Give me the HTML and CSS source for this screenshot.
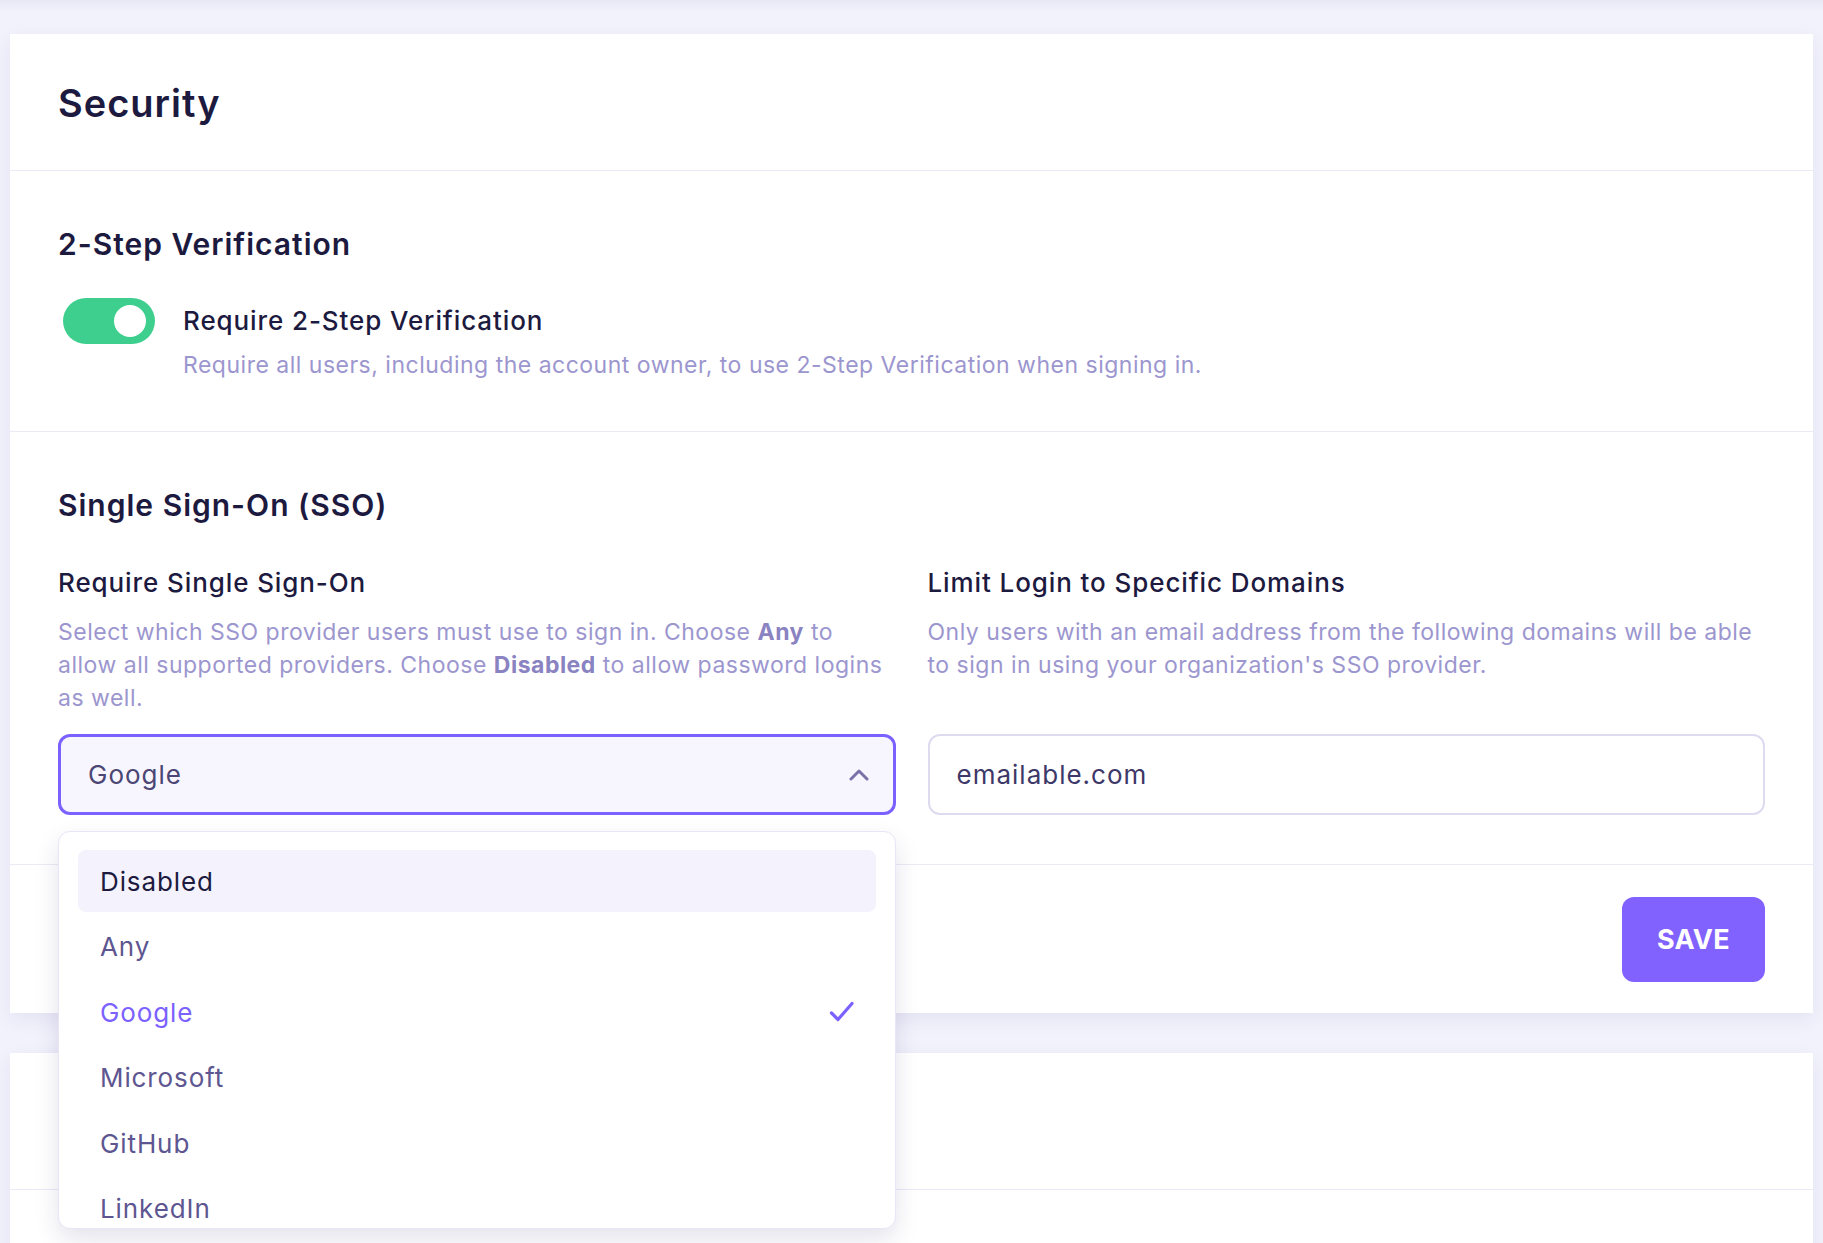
FILE: index.html
```html
<!DOCTYPE html>
<html lang="en">
<head>
    <meta charset="UTF-8">
    <meta name="viewport" content="width=device-width, initial-scale=1.0">
    <title>Security</title>
    <link rel="stylesheet" href="styles.css">
</head>
<body>

    <div class="page">
        <div class="card">
            <div class="card-header">
                <h1>Security</h1>
            </div>

            <!-- 2-Step Verification -->
            <section class="section">
                <h2>2-Step Verification</h2>
                <div class="toggle-row">
                    <span class="toggle on"><span class="knob"></span></span>
                    <div class="toggle-text">
                        <div class="label">Require 2-Step Verification</div>
                        <p class="desc">Require all users, including the account owner, to use 2-Step Verification when signing in.</p>
                    </div>
                </div>
            </section>

            <!-- SSO -->
            <section class="section">
                <h2>Single Sign-On (SSO)</h2>
                <div class="columns">
                    <div class="field">
                        <div class="label">Require Single Sign-On</div>
                        <p class="desc">Select which SSO provider users must use to sign in. Choose <b>Any</b> to allow all supported providers. Choose <b>Disabled</b> to allow password logins as well.</p>
                        <div class="select-wrap">
                            <div class="select open">
                                <span>Google</span>
                                <svg class="chevron" width="20" height="13" viewBox="0 0 20 13"><path d="M2 11 L10 3 L18 11" fill="none" stroke="#7a71a8" stroke-width="3" stroke-linecap="round" stroke-linejoin="round"/></svg>
                            </div>
                            <div class="dropdown">
                                <div class="option active">Disabled</div>
                                <div class="option">Any</div>
                                <div class="option selected">
                                    <span>Google</span>
                                    <svg width="26" height="22" viewBox="0 0 26 22"><path d="M2.5 12 L9 18.5 L23 2.5" fill="none" stroke="#7b61ff" stroke-width="3.2" stroke-linecap="round" stroke-linejoin="round"/></svg>
                                </div>
                                <div class="option">Microsoft</div>
                                <div class="option">GitHub</div>
                                <div class="option">LinkedIn</div>
                                <div class="option">Okta</div>
                            </div>
                        </div>
                    </div>
                    <div class="field">
                        <div class="label">Limit Login to Specific Domains</div>
                        <p class="desc">Only users with an email address from the following domains will be able to sign in using your organization's SSO provider.</p>
                        <input class="text-input" type="text" value="emailable.com">
                    </div>
                </div>
            </section>

            <div class="card-footer">
                <button class="btn-save">SAVE</button>
            </div>
        </div>

        <div class="card card-next">
            <div class="section empty"></div>
            <div class="section empty"></div>
        </div>
    </div>

</body>
</html>
```

FILE: styles.css
```css
* {
    box-sizing: border-box;
}

html, body {
    height: 100%;
}

body {
    margin: 0;
    font-family: 'Inter', 'Noto Sans', sans-serif;
    background: linear-gradient(#e8e8f4 0, #f2f2fc 12px);
    color: #1d1a3f;
    overflow: hidden;
}

.page {
    padding: 34px 10px 0 10px;
}

.card {
    background-color: #ffffff;
    box-shadow: 0 6px 18px rgba(40, 30, 110, 0.07);
}

.card-next {
    margin-top: 40px;
    min-height: 400px;
}

h1 {
    margin: 0;
    font-size: 38px;
    line-height: 50px;
    font-weight: 600;
    letter-spacing: 1px;
    color: #1d1a3f;
}

h2 {
    margin: 0;
    font-size: 30px;
    line-height: 36px;
    font-weight: 600;
    letter-spacing: 1px;
    color: #1d1a3f;
}

.card-header {
    padding: 44px 48px 42px 48px;
    border-bottom: 1px solid #ebeaf6;
}

.section {
    padding: 55px 48px 49px 48px;
    border-bottom: 1px solid #ebeaf6;
}

.section.empty {
    height: 137px;
    padding: 0;
}

.label {
    font-size: 26px;
    line-height: 32px;
    font-weight: 500;
    letter-spacing: 0.9px;
    color: #1d1a3f;
}

.desc {
    margin: 12px 0 0 0;
    font-size: 23px;
    line-height: 33px;
    letter-spacing: 0.5px;
    color: #9c96cf;
}

.desc b {
    font-weight: 700;
    color: #8a83c2;
}

/* Toggle */
.toggle-row {
    display: flex;
    gap: 28px;
    margin-top: 36px;
}

.toggle {
    flex: none;
    width: 92px;
    height: 46px;
    margin-left: 5px;
    border-radius: 23px;
    background-color: #3ecf8e;
    display: flex;
    align-items: center;
    justify-content: flex-end;
    padding-right: 9px;
}

.knob {
    width: 32px;
    height: 32px;
    border-radius: 50%;
    background-color: #ffffff;
}

.toggle-text {
    padding-top: 7px;
}

/* SSO columns */
.columns {
    display: grid;
    grid-template-columns: 1fr 1fr;
    gap: 32px;
    margin-top: 44px;
}

.field {
    display: flex;
    flex-direction: column;
}

.field .desc {
    margin-top: 17px;
    margin-bottom: 19px;
}

.select-wrap, .text-input {
    margin-top: auto;
}

.select-wrap {
    position: relative;
    z-index: 10;
}

.select {
    height: 81px;
    border: 3px solid #7b61ff;
    border-radius: 12px;
    background-color: #f7f6fe;
    display: flex;
    align-items: center;
    justify-content: space-between;
    padding: 0 24px 0 27px;
    font-size: 26px;
    letter-spacing: 1px;
    color: #4b4674;
}

.text-input {
    height: 81px;
    width: 100%;
    border: 2px solid #dddbf0;
    border-radius: 12px;
    padding: 0 27px;
    font-family: inherit;
    font-size: 26px;
    letter-spacing: 1px;
    color: #3d3868;
    background-color: #ffffff;
    outline: none;
}

/* Dropdown list */
.dropdown {
    position: absolute;
    top: 97px;
    left: 0;
    right: 0;
    height: 398px;
    overflow: hidden;
    background-color: #ffffff;
    border: 1px solid #e7e5f6;
    border-radius: 12px;
    box-shadow: 0 10px 24px rgba(30, 20, 90, 0.12);
    padding: 18px 19px;
    display: flex;
    flex-direction: column;
    gap: 3.5px;
}

.option {
    flex: none;
    height: 62px;
    border-radius: 8px;
    padding: 0 21px 0 22px;
    display: flex;
    align-items: center;
    justify-content: space-between;
    font-size: 26px;
    letter-spacing: 0.9px;
    color: #5d5690;
}

.option.active {
    background-color: #f3f2fd;
    color: #1d1a3f;
}

.option.selected {
    color: #7b61ff;
}

/* Footer */
.card-footer {
    display: flex;
    justify-content: flex-end;
    padding: 32px 48px 31px 48px;
}

.btn-save {
    height: 85px;
    padding: 0 35px;
    border: none;
    border-radius: 12px;
    background-color: #8162ff;
    color: #ffffff;
    font-family: inherit;
    font-size: 27px;
    font-weight: 700;
    letter-spacing: 0.3px;
    cursor: pointer;
}
```
